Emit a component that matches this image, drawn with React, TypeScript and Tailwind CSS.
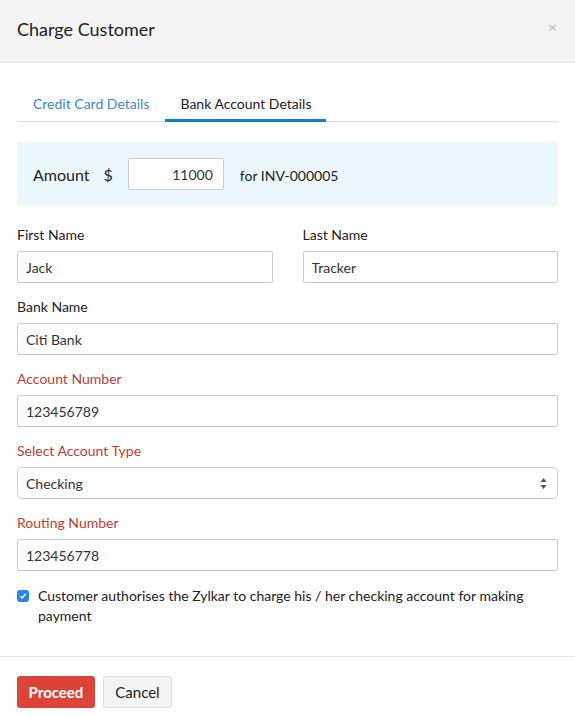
import React, { useState } from "react";

const font = { fontFamily: "Lato, 'Open Sans', Arial, sans-serif" };

const Field: React.FC<{ label: string; value: string; required?: boolean }> = ({
    label,
    value,
    required,
}) => (
    <div className="flex flex-col">
        <label
            className={`text-[14px] leading-4 mb-2 ${
                required ? "text-[#c23b34]" : "text-[#222]"
            }`}
        >
            {label}
        </label>
        <input
            defaultValue={value}
            className="h-8 w-full border border-[#cccccc] rounded-[2px] px-2 text-[14px] text-[#333] outline-none"
        />
    </div>
);

export default function App() {
    const [tab, setTab] = useState<"card" | "bank">("bank");
    const [agree, setAgree] = useState(true);

    return (
        <div className="w-[575px] h-[716px] bg-white flex flex-col" style={font}>
            {/* header */}
            <div className="h-[63px] shrink-0 flex items-center justify-between px-[17px] pb-[4px] bg-[#f4f4f4] border-b border-[#e6e6e6]">
                <h1 className="text-[18px] text-[#222] font-normal">Charge Customer</h1>
                <button className="text-[#bbb] text-[16px] leading-none -mt-1 mr-[1px]">×</button>
            </div>

            <div className="flex-1 px-[17px] pt-[22px]">
                {/* tabs */}
                <div className="flex border-b border-[#dddddd]">
                    <button
                        onClick={() => setTab("card")}
                        className={`h-[37px] -mb-px pt-[3px] px-[16px] text-[14px] border-b-[3px] ${
                            tab === "card"
                                ? "border-[#0c7fd4] text-[#222]"
                                : "border-transparent text-[#3a87d2]"
                        }`}
                    >
                        Credit Card Details
                    </button>
                    <button
                        onClick={() => setTab("bank")}
                        className={`h-[37px] -mb-px pt-[3px] px-[15px] text-[14px] border-b-[3px] ${
                            tab === "bank"
                                ? "border-[#0c7fd4] text-[#222]"
                                : "border-transparent text-[#3a87d2]"
                        }`}
                    >
                        Bank Account Details
                    </button>
                </div>

                {/* amount */}
                <div className="mt-[20px] h-16 bg-[#ecf7fd] flex items-center px-4 pt-[2px]">
                    <span className="text-[16px] text-[#222]">Amount</span>
                    <span className="text-[16px] text-[#222] ml-[14px]">$</span>
                    <input
                        defaultValue="11000"
                        className="ml-[15px] w-24 h-8 -mt-[2px] bg-white border border-[#cccccc] rounded-[2px] px-[10px] text-right text-[14px] text-[#333] outline-none"
                    />
                    <span className="ml-4 text-[14px] text-[#222]">for INV-000005</span>
                </div>

                {/* form */}
                <div className="mt-[21px] flex flex-col gap-4">
                    <div className="grid grid-cols-2 gap-[30px]">
                        <Field label="First Name" value="Jack" />
                        <Field label="Last Name" value="Tracker" />
                    </div>
                    <Field label="Bank Name" value="Citi Bank" />
                    <Field label="Account Number" value="123456789" required />
                    <div className="flex flex-col">
                        <label className="text-[14px] leading-4 mb-2 text-[#c23b34]">
                            Select Account Type
                        </label>
                        <div className="relative h-8 border border-[#cccccc] rounded-[5px] flex items-center px-2 text-[14px] text-[#333]">
                            Checking
                            <svg
                                className="absolute right-[10px] top-[9px]"
                                width="7"
                                height="13"
                                viewBox="0 0 7 13"
                            >
                                <path d="M3.5 1 L6.5 5 H0.5 Z" fill="#555" />
                                <path d="M3.5 12 L6.5 8 H0.5 Z" fill="#555" />
                            </svg>
                        </div>
                    </div>
                    <Field label="Routing Number" value="123456778" required />
                </div>

                {/* consent */}
                <label className="mt-[15px] flex items-start gap-[9px] text-[14px] leading-[20px] text-[#222] cursor-pointer">
                    <span
                        onClick={() => setAgree(!agree)}
                        className={`mt-[4px] w-[12px] h-[12px] shrink-0 rounded-[3px] flex items-center justify-center ${
                            agree ? "bg-[#2a83f0]" : "border border-[#999] bg-white"
                        }`}
                    >
                        {agree && (
                            <svg width="8" height="8" viewBox="0 0 8 8">
                                <path
                                    d="M1.3 4.2 L3.2 6 L6.7 1.8"
                                    stroke="white"
                                    strokeWidth="1.5"
                                    fill="none"
                                />
                            </svg>
                        )}
                    </span>
                    <span className="pr-[20px]">
                        Customer authorises the Zylkar to charge his / her checking account for making
                        payment
                    </span>
                </label>
            </div>

            {/* footer */}
            <div className="h-[60px] shrink-0 border-t border-[#e6e6e6] px-[17px] pt-[19px] flex gap-2 items-start">
                <button className="h-8 w-[78px] rounded-[3px] bg-[#dc4437] text-white text-[15px] font-bold">
                    Proceed
                </button>
                <button className="h-8 w-[69px] rounded-[3px] bg-[#f4f4f4] border border-[#dcdcdc] text-[#222] text-[15px]">
                    Cancel
                </button>
            </div>
        </div>
    );
}
